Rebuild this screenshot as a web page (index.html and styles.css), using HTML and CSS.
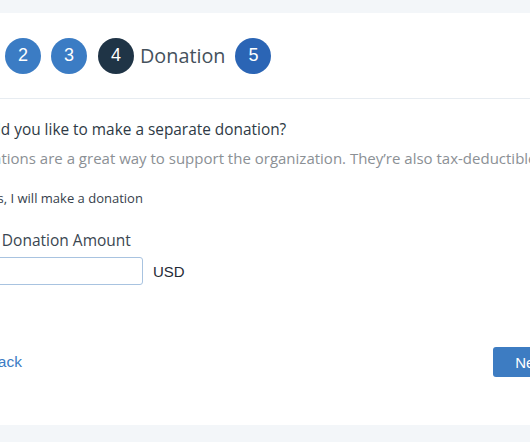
FILE: index.html
```html
<!DOCTYPE html>
<html>
<head>
<meta charset="utf-8">
<link rel="stylesheet" href="styles.css">
</head>
<body>
<div class="card">
  <div class="steps">
    <span class="step done">1</span>
    <span class="step done">2</span>
    <span class="step done">3</span>
    <span class="step current">4</span>
    <span class="step-label">Donation</span>
    <span class="step todo">5</span>
  </div>
  <div class="form">
    <h2 class="question">Would you like to make a separate donation?</h2>
    <p class="hint">Donations are a great way to support the organization. They’re also tax-deductible.</p>
    <label class="check"><input type="checkbox"><span>Yes, I will make a donation</span></label>
    <div class="field-label">Your Donation Amount</div>
    <div class="amount-row">
      <input class="amount" type="text">
      <span class="currency">USD</span>
    </div>
  </div>
  <div class="actions">
    <a class="back">‹ Back</a>
    <button class="next">Next</button>
  </div>
</div>
</body>
</html>
```
FILE: styles.css
```css
html, body {
  margin: 0;
  padding: 0;
}
body {
  background: #f3f6f9;
  padding-top: 13px;
  height: 442px;
  box-sizing: border-box;
  overflow: hidden;
  font-family: "Open Sans", "Noto Sans", sans-serif;
}
.card {
  background: #ffffff;
  margin-left: -56px;
  width: 644px;
  height: 412px;
  display: flex;
  flex-direction: column;
}
.steps {
  height: 85px;
  border-bottom: 1px solid #e7ecf1;
  display: flex;
  align-items: center;
  gap: 10px;
  padding-left: 15px;
}
.step {
  width: 36px;
  height: 36px;
  border-radius: 50%;
  display: flex;
  align-items: center;
  justify-content: center;
  color: #ffffff;
  font-family: "Liberation Sans", Arial, sans-serif;
  font-size: 18px;
}
.step.done { background: #3b7cc4; }
.step.current { background: #1f3446; margin-left: 1px; }
.step.todo { background: #2b65b5; }
.step-label {
  font-size: 19.8px;
  color: #45515c;
  margin-left: -4px;
}
.form {
  padding: 0 20px;
  display: flex;
  flex-direction: column;
}
.question {
  margin: 21px 0 0;
  font-size: 15.4px;
  line-height: 20px;
  font-weight: 400;
  color: #2e3a45;
}
.hint {
  margin: 8px 0 0;
  font-size: 15px;
  line-height: 20px;
  color: #8b9095;
  white-space: nowrap;
}
.check {
  margin-top: 21px;
  display: flex;
  align-items: center;
  gap: 6px;
  font-size: 13px;
  line-height: 18px;
  color: #36414c;
}
.check input { margin: 0; width: 13px; height: 13px; }
.field-label {
  margin-top: 23px;
  font-size: 15.5px;
  line-height: 20px;
  color: #3a4651;
}
.amount-row {
  margin-top: 7px;
  display: flex;
  align-items: center;
  gap: 10px;
}
.amount {
  width: 179px;
  height: 28px;
  box-sizing: border-box;
  border: 1px solid #a8c3e0;
  border-radius: 3px;
  margin: 0;
}
.currency {
  font-family: "Liberation Sans", Arial, sans-serif;
  font-size: 15px;
  color: #1f2a35;
}
.actions {
  margin-top: auto;
  margin-bottom: 48px;
  padding: 0 20px 0 34px;
  display: flex;
  align-items: center;
  justify-content: space-between;
}
.back {
  font-family: "Liberation Sans", Arial, sans-serif;
  font-size: 15.5px;
  color: #3b7cc4;
}
.next {
  height: 30px;
  padding: 0 22px;
  background: #3d7cc2;
  border: none;
  border-radius: 3px;
  color: #ffffff;
  font-family: "Liberation Sans", Arial, sans-serif;
  font-size: 15px;
}
```
